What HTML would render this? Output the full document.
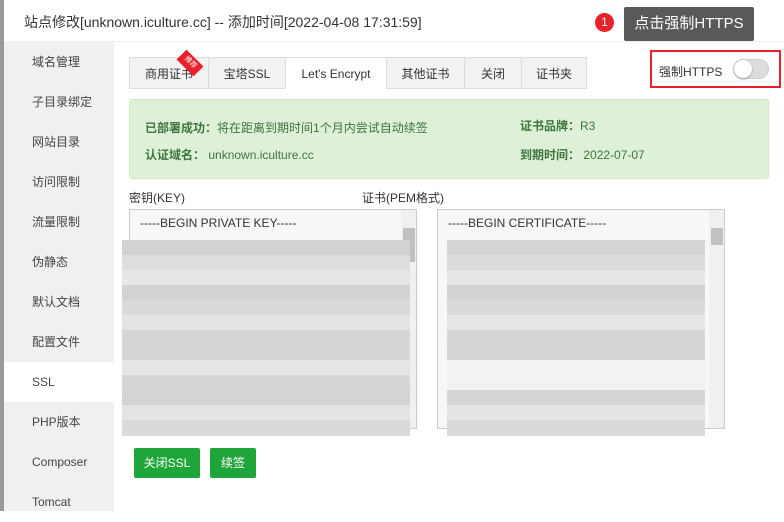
<!DOCTYPE html>
<html><head><meta charset="utf-8"><style>
*{margin:0;padding:0;box-sizing:border-box}
body{width:784px;height:511px;overflow:hidden;background:#fff;font-family:"Liberation Sans","Noto Sans CJK SC",sans-serif;font-size:12px;color:#333;position:relative}
.a{position:absolute}
.side{left:4px;top:42px;width:110px;height:469px;background:#f0f0f0}
.side div{height:40px;line-height:40px;padding-left:28px;font-size:12px;color:#444}
.side .on{background:#fff}
.tab{top:57px;height:32px;line-height:32px;text-align:center;border:1px solid #ddd;background:#f2f2f2;font-size:12px;color:#333}
.row{height:15px}
</style></head><body>
<div class="a" style="left:0;top:0;width:4px;height:511px;background:#999"></div>
<div class="a" style="left:4px;top:0;width:780px;height:42px;background:#fff;border-bottom:1px solid #eee"></div>
<div class="a" style="left:24px;top:12px;font-size:14px;color:#333">站点修改[unknown.iculture.cc] -- 添加时间[2022-04-08 17:31:59]</div>
<div class="a" style="left:595px;top:13px;width:19px;height:19px;border-radius:50%;background:#e8222a;color:#fff;text-align:center;line-height:19px;font-size:12px">1</div>
<div class="a" style="left:618px;top:19px;width:0;height:0;border:6px solid transparent;border-right-color:#595959"></div>
<div class="a" style="left:624px;top:7px;width:130px;height:34px;background:#595959;border-radius:2px;color:#fff;font-size:15px;line-height:34px;text-align:center">点击强制HTTPS</div>
<div class="side a"><div>域名管理</div><div>子目录绑定</div><div>网站目录</div><div>访问限制</div><div>流量限制</div><div>伪静态</div><div>默认文档</div><div>配置文件</div><div class="on">SSL</div><div>PHP版本</div><div>Composer</div><div>Tomcat</div></div>
<div class="a" style="left:129px;top:88px;width:458px;height:1px;background:#ddd"></div>
<div class="a tab" style="left:129px;width:80px">商用证书</div>
<div class="a" style="left:178px;top:56px;width:24px;height:14px;background:#e8222a;transform:rotate(45deg);color:#fff;font-size:7px;text-align:center;line-height:14px">推荐</div>
<div class="a tab" style="left:208px;width:78px">宝塔SSL</div>
<div class="a tab" style="left:285px;width:102px;background:#fff;border-bottom-color:#fff">Let's Encrypt</div>
<div class="a tab" style="left:386px;width:79px">其他证书</div>
<div class="a tab" style="left:464px;width:58px">关闭</div>
<div class="a tab" style="left:521px;width:66px">证书夹</div>
<div class="a" style="left:650px;top:50px;width:131px;height:38px;border:2px solid #e8222a"></div>
<div class="a" style="left:659px;top:63px;font-size:12px;color:#333">强制HTTPS</div>
<div class="a" style="left:733px;top:59px;width:36px;height:20px;border-radius:10px;background:#ddd;border:1px solid #ccc"></div>
<div class="a" style="left:734px;top:60px;width:18px;height:18px;border-radius:50%;background:#fff;box-shadow:0 1px 2px #999"></div>
<div class="a" style="left:129px;top:99px;width:640px;height:80px;background:#dff0d8;border:1px solid #d6e9c6;border-radius:3px"></div>
<div class="a" style="left:145px;top:119px;color:#3c763d"><b>已部署成功：</b>将在距离到期时间1个月内尝试自动续签</div>
<div class="a" style="left:145px;top:146px;color:#3c763d"><b>认证域名：</b> unknown.iculture.cc</div>
<div class="a" style="left:520px;top:117px;color:#3c763d"><b>证书品牌：</b>R3</div>
<div class="a" style="left:520px;top:146px;color:#3c763d"><b>到期时间：</b> 2022-07-07</div>
<div class="a" style="left:129px;top:189px">密钥(KEY)</div>
<div class="a" style="left:362px;top:189px">证书(PEM格式)</div>
<div class="a" style="left:129px;top:209px;width:288px;height:220px;border:1px solid #ccc;background:#f7f7f7;overflow:hidden">
<div style="padding:6px 0 0 10px">-----BEGIN PRIVATE KEY-----</div>
<div class="a" style="left:271px;top:0;width:16px;height:218px;background:#f0f0f0"><div style="margin:18px 2px 0;height:34px;background:#c1c1c1"></div></div>
</div>
<div class="a" style="left:437px;top:209px;width:288px;height:220px;border:1px solid #ccc;background:#f7f7f7;overflow:hidden">
<div style="padding:6px 0 0 10px">-----BEGIN CERTIFICATE-----</div>
<div class="a" style="left:271px;top:0;width:16px;height:218px;background:#f0f0f0"><div style="margin:18px 2px 0;height:17px;background:#c1c1c1"></div></div>
</div>
<div class="a" style="left:122px;top:240px;width:288px;height:196px;background:linear-gradient(#d2d2d2 0 15px,#dddddd 15px 30px,#e6e6e6 30px 45px,#d3d3d3 45px 60px,#dadada 60px 75px,#e4e4e4 75px 90px,#d6d6d6 90px 105px,#d6d6d6 105px 120px,#e6e6e6 120px 135px,#d6d6d6 135px 150px,#d4d4d4 150px 165px,#e4e4e4 165px 180px,#dadada 180px 196px)"></div>
<div class="a" style="left:447px;top:240px;width:258px;height:196px;background:linear-gradient(#d4d4d4 0 15px,#dcdcdc 15px 30px,#e6e6e6 30px 45px,#d3d3d3 45px 60px,#dadada 60px 75px,#e6e6e6 75px 90px,#d6d6d6 90px 105px,#d4d4d4 105px 120px,#f2f2f2 120px 150px,#d6d6d6 150px 165px,#e4e4e4 165px 180px,#dadada 180px 196px)"></div>
<div class="a" style="left:134px;top:448px;width:66px;height:30px;background:#20a53a;border-radius:2px;color:#fff;text-align:center;line-height:30px">关闭SSL</div>
<div class="a" style="left:210px;top:448px;width:46px;height:30px;background:#20a53a;border-radius:2px;color:#fff;text-align:center;line-height:30px">续签</div>
</body></html>
